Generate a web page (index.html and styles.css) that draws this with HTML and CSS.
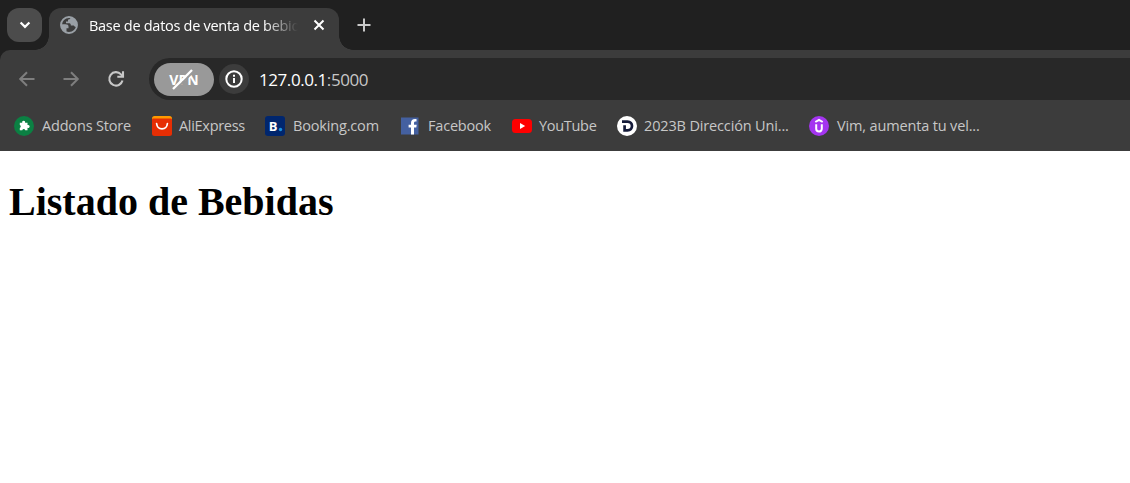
FILE: index.html
```html
<!DOCTYPE html>
<html lang="es">
<head>
<meta charset="utf-8">
<title>Base de datos de venta de bebidas</title>
<link rel="stylesheet" href="styles.css">
</head>
<body>
<header class="browser">
  <div class="tabstrip">
    <button class="tab-search" aria-label="Buscar pestañas"><svg width="12" height="8" viewBox="0 0 12 8"><path d="M1.600 1.500 6 5.900l4.400-4.400" fill="none" stroke="#fff" stroke-width="2.200"/></svg></button>
    <div class="tab">
      <svg class="globe" width="18" height="18" viewBox="0 0 18 18"><circle cx="9" cy="9" r="8" fill="#3c3c3c" stroke="#9aa0a6" stroke-width="1.900"/><path d="M10.500 1.200C10.800 3 9.200 3.500 8 3.600V5.500H6v1.800h3.500c1 0 1.300 1 1.300 2.200h2.300c1 0 1.500.6 1.700 1.300l1.800.2C17.800 6.500 15.300 1.400 10.500 1.200ZM1 8.300h4.500c2 0 3 .9 3 2.200v1.800h-2V16.800C3 15.800.8 12.300 1 8.300Z" fill="#9aa0a6"/></svg>
      <span class="tab-title">Base de datos de venta de bebidas</span>
      <svg class="close" width="12" height="12" viewBox="0 0 12 12"><path d="m1.500 1.500 9 9m0-9-9 9" stroke="#fff" stroke-width="2"/></svg>
    </div>
    <svg class="plus" width="14" height="14" viewBox="0 0 14 14"><path d="M7 .5v13M.5 7h13" stroke="#c9c9c9" stroke-width="2"/></svg>
  </div>
  <div class="toolbar">
    <svg class="nav" width="18" height="18" viewBox="0 0 18 18"><path d="M16.500 9H2.500M9 2.200 2.200 9 9 15.800" fill="none" stroke="#7e7e7e" stroke-width="2"/></svg>
    <svg class="nav" width="18" height="18" viewBox="0 0 18 18"><path d="M1.500 9h14M9 2.200 15.800 9 9 15.800" fill="none" stroke="#7e7e7e" stroke-width="2"/></svg>
    <svg class="nav reload" width="18" height="18" viewBox="0 0 18 18"><path d="M15.500 10.500A6.700 6.700 0 1 1 14 4.400l1.500 1.600M16 1.200v5.600h-5.700" fill="none" stroke="#c7c7c7" stroke-width="2.100"/></svg>
    <div class="address">
      <span class="vpn">VPN<svg width="24" height="24" viewBox="0 0 24 24"><path d="m3.500 22.500 19-19" stroke="#999" stroke-width="2"/><path d="m2 21 19-19" stroke="#fff" stroke-width="2.300"/></svg></span>
      <span class="info"><svg width="18" height="18" viewBox="0 0 18 18"><circle cx="9" cy="9" r="7.700" fill="none" stroke="#fff" stroke-width="2"/><path d="M9 8v5M9 4.800v2" stroke="#fff" stroke-width="2"/></svg></span>
      <span class="url">127.0.0.1<span class="port">:5000</span></span>
    </div>
  </div>
  <nav class="bookmarks">
    <a class="bookmark"><svg viewBox="0 0 20 20"><circle cx="10" cy="10" r="10" fill="#0b8043"/><path d="M5.800 6.800h2.500a1.500 1.500 0 1 1 2.700 0h2.500v2.300a1.500 1.500 0 1 1 0 2.700V14.200h-2.300a1.500 1.500 0 0 0-2.900 0H5.800v-2.300a1.500 1.500 0 0 0 0-2.800Z" fill="#fff"/></svg><span class="label addons">Addons Store</span></a>
    <a class="bookmark"><svg viewBox="0 0 20 20"><rect width="20" height="12" rx="2.500" fill="#ff9a00"/><path d="M0 3.500Q0 2.500 1 2.500h18q1 0 1 1v14q0 2.500-2.500 2.500h-15Q0 20 0 17.500Z" fill="#e62e04"/><path d="M4.600 7.500c.8 7.200 10 7.200 10.800 0" fill="none" stroke="#fff" stroke-width="1.700" stroke-linecap="round"/></svg><span class="label">AliExpress</span></a>
    <a class="bookmark"><svg viewBox="0 0 20 20"><rect width="20" height="20" rx="3" fill="#00266e"/><text class="b-logo" x="3.800" y="15">B</text><circle cx="15.500" cy="13.500" r="1.700" fill="#1a91dc"/></svg><span class="label booking">Booking.com</span></a>
    <a class="bookmark"><svg viewBox="0 0 20 20"><path d="M1 1.500h17.500v17H1Z" fill="#4460a0"/><path d="M11 18.500v-7H8.600V8.700H11V6.900c0-2.600 1.500-3.900 4-3.900h1.500v2.600h-1c-1 0-1.500.5-1.500 1.500v1.600h2.700l-.4 2.800H14v7Z" fill="#fff"/></svg><span class="label facebook">Facebook</span></a>
    <a class="bookmark"><svg viewBox="0 0 20 20"><rect y="3" width="20" height="14" rx="3.500" fill="#f00"/><path d="m8 7 5.200 3L8 13Z" fill="#fff"/></svg><span class="label">YouTube</span></a>
    <a class="bookmark"><svg viewBox="0 0 20 20"><circle cx="10" cy="10" r="10" fill="#fff"/><path d="M5 5.600h5.500c6 0 6 8.800 0 8.800H7.600V9.300" fill="none" stroke="#151b3a" stroke-width="2.700"/></svg><span class="label direccion">2023B Dirección Uni...</span></a>
    <a class="bookmark"><svg viewBox="0 0 20 20"><circle cx="10" cy="10" r="10" fill="#a435f0"/><path d="m6.300 6 3.700-2.200L13.700 6M7.200 8.300v4.500c0 3.700 5.600 3.700 5.600 0V8.300" fill="none" stroke="#fff" stroke-width="2"/></svg><span class="label vim">Vim, aumenta tu vel...</span></a>
  </nav>
</header>
<main class="page"><h1 class="heading">Listado de Bebidas</h1></main>
</body>
</html>
```

FILE: styles.css
```css
* { box-sizing: border-box; }
body { margin: 0; background: #fff; overflow: hidden; }
svg { display: block; flex: none; }

.browser {
  height: 151px;
  background: linear-gradient(#202020 60px, #3c3c3c 60px);
  font-family: "Open Sans", "Noto Sans", sans-serif;
}

.tabstrip {
  display: flex;
  height: 50px;
  padding: 8px 0 0 7px;
  background: #202020;
}
.tab-search {
  position: relative;
  z-index: 1;
  display: flex;
  align-items: center;
  justify-content: center;
  width: 35px;
  height: 34px;
  padding: 0;
  border: 0;
  border-radius: 12px;
  background: #4c4c4c;
}
.tab {
  position: relative;
  display: flex;
  width: 290px;
  height: 42px;
  margin-left: 7px;
  padding: 0 14px 8px 11px;
  align-items: center;
  border-radius: 12px 12px 0 0;
  background: #3c3c3c;
}
.tab::before,
.tab::after {
  content: "";
  position: absolute;
  bottom: 0;
  width: 14px;
  height: 14px;
}
.tab::before { right: 100%; background: radial-gradient(circle at 0 0, #202020 13.500px, #3c3c3c 14px); }
.tab::after { left: 100%; background: radial-gradient(circle at 100% 0, #202020 13.500px, #3c3c3c 14px); }
.tab-title {
  width: 211px;
  margin-left: 11px;
  overflow: hidden;
  white-space: nowrap;
  color: #fff;
  font-size: 14.500px;
  letter-spacing: -0.280px;
  -webkit-mask-image: linear-gradient(to right, #000 175px, transparent 209px);
  mask-image: linear-gradient(to right, #000 175px, transparent 209px);
}
.close { margin-left: 13px; }
.plus { margin: 10px 0 0 18px; }

.toolbar {
  display: flex;
  height: 58px;
  padding: 8px 0 0 18px;
  border-radius: 10px 0 0 0;
  background: #3c3c3c;
}
.nav { margin: 12px 26px 0 0; }
.reload { margin: 12px 24px 0 1px; }
.address {
  display: flex;
  flex: 1;
  height: 42px;
  padding-left: 5px;
  align-items: center;
  border-radius: 21px 0 0 21px;
  background: #282828;
}
.vpn {
  position: relative;
  width: 60px;
  height: 33px;
  border-radius: 17px;
  background: #999;
  color: #fff;
  text-align: center;
  font: 700 14px/34px "Open Sans", sans-serif;
}
.vpn svg { position: absolute; left: 17px; top: 5px; }
.info {
  display: flex;
  width: 30px;
  height: 30px;
  margin-left: 5px;
  align-items: center;
  justify-content: center;
  border-radius: 50%;
  background: #3c3c3c;
}
.url {
  margin-left: 10px;
  color: #fff;
  font-size: 17px;
  letter-spacing: -0.430px;
}
.port { color: #c7c7c7; }

.bookmarks {
  display: grid;
  grid-template-columns: 138px 113px 135px 112px 105px 192px auto;
  height: 36px;
  padding-left: 14px;
}
.bookmark {
  display: flex;
  height: 36px;
  align-items: center;
  gap: 7px;
}
.bookmark svg { width: 20px; height: 20px; }
.label {
  padding-bottom: 2px;
  color: #c7c7c7;
  font-size: 14.500px;
  letter-spacing: -0.300px;
  white-space: nowrap;
}
.addons { margin-left: 1px; letter-spacing: -0.180px; }
.booking { margin-left: 1px; letter-spacing: -0.170px; }
.facebook { margin-left: 1px; letter-spacing: -0.200px; }
.direccion { letter-spacing: -0.150px; }
.vim { margin-left: 1px; letter-spacing: -0.150px; }
.b-logo { font: 700 13px "Open Sans", sans-serif; fill: #fff; }

.bookmarks,
.toolbar { position: relative; }
.bookmarks { height: 43px; padding-bottom: 7px; background: #3c3c3c; }

.page { padding: 28px 9px; }
.heading {
  margin: 0;
  font: 700 40px/46px "Liberation Serif", serif;
  color: #000;
}
```
